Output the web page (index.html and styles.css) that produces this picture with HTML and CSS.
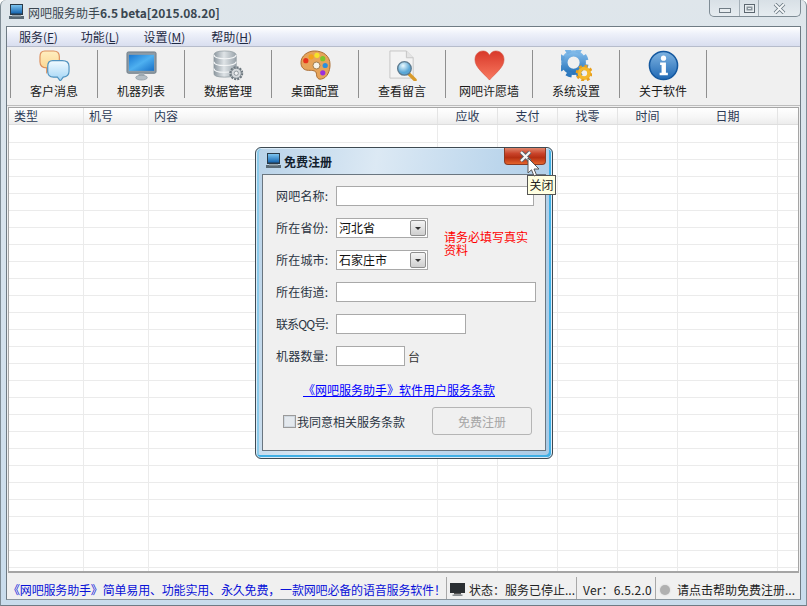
FILE: index.html
```html
<!DOCTYPE html>
<html lang="zh-CN">
<head>
<meta charset="utf-8">
<title>网吧服务助手</title>
<link rel="stylesheet" href="styles.css">
</head>
<body>
<div class="window">
  <header class="titlebar">
    <svg class="app-icon" viewBox="0 0 16 16"><defs><linearGradient id="scr" x1="0" y1="0" x2="0" y2="1"><stop offset="0" stop-color="#7cc4f0"/><stop offset="1" stop-color="#1565b0"/></linearGradient></defs><rect x="1" y="0" width="13" height="11" fill="#2a3a48"/><rect x="2" y="1" width="11" height="8.5" fill="url(#scr)"/><rect x="0" y="12" width="15" height="3" fill="#5a6a75"/><rect x="3" y="11" width="9" height="1.5" fill="#9aa8b0"/></svg>
    <span class="title-text">网吧服务助手<b>6.5 beta[2015.08.20]</b></span>
    <div class="win-controls">
      <span class="wc wc-min"><i class="glyph-min"></i></span>
      <span class="wc wc-max"><i class="glyph-max"></i></span>
      <span class="wc wc-close"><svg width="13" height="11" viewBox="0 0 13 11"><path d="M2 1 L11 10 M11 1 L2 10" stroke="#6d7b85" stroke-width="3.600" fill="none"/><path d="M2 1 L11 10 M11 1 L2 10" stroke="#f4f7f9" stroke-width="1.800" fill="none"/></svg></span>
    </div>
  </header>

  <div class="frame">
    <nav class="menubar">
      <span class="menu m1">服务(<u>F</u>)</span>
      <span class="menu m2">功能(<u>L</u>)</span>
      <span class="menu m3">设置(<u>M</u>)</span>
      <span class="menu m4">帮助(<u>H</u>)</span>
    </nav>

    <div class="toolbar">
      <div class="tool">
        <svg class="ticon" viewBox="0 0 32 32"><defs><linearGradient id="b1" x1="0" y1="0" x2="0" y2="1"><stop offset="0" stop-color="#ffeec0"/><stop offset="1" stop-color="#fbd28a"/></linearGradient><linearGradient id="b2" x1="0" y1="0" x2="0" y2="1"><stop offset="0" stop-color="#f2fbff"/><stop offset="1" stop-color="#9fd3f5"/></linearGradient></defs><path d="M6 1 H15 Q21 1 21 7 V13 Q21 19 15 19 H11 L8 23 V18.500 Q1 18 1 12 V7 Q1 1 6 1Z" fill="url(#b1)" stroke="#dd8f5c" stroke-width="1.200"/><path d="M14 11 H24 Q31 11 31 17 V22 Q31 27.500 25 28 L22 32 L19 28 H15 Q9 28 9 22 V17 Q9 11 14 11Z" fill="url(#b2)" stroke="#4f92bf" stroke-width="1.200"/></svg>
        <span class="tlabel">客户消息</span>
      </div>
      <div class="tool">
        <svg class="ticon" viewBox="0 0 32 32"><defs><linearGradient id="m1" x1="0" y1="0" x2="1" y2="1"><stop offset="0" stop-color="#1a78d2"/><stop offset=".5" stop-color="#4eb0f0"/><stop offset="1" stop-color="#1770c8"/></linearGradient></defs><rect x="1" y="2" width="30" height="22" rx="1.500" fill="#8e9ba5" stroke="#6e7c86"/><rect x="3" y="5" width="26" height="16.500" fill="url(#m1)"/><rect x="13" y="24" width="6" height="3" fill="#a5b0b8"/><ellipse cx="16" cy="28.500" rx="6" ry="2.500" fill="#b4bec5" stroke="#7d8a93" stroke-width=".6"/></svg>
        <span class="tlabel">机器列表</span>
      </div>
      <div class="tool">
        <svg class="ticon" viewBox="0 0 32 32"><defs><linearGradient id="d1" x1="0" y1="0" x2="1" y2="0"><stop offset="0" stop-color="#8c979f"/><stop offset=".45" stop-color="#dfe4e7"/><stop offset="1" stop-color="#99a3aa"/></linearGradient></defs><path d="M1 5 Q1 1 12 1 T24 5 V24 Q24 28 12 28 T1 24Z" fill="url(#d1)" stroke="#8a959c" stroke-width=".7"/><path d="M1 12 Q1 16 12 16 T24 12 M1 19 Q1 23 12 23 T24 19 M1 5 Q1 9 12 9 T24 5" fill="none" stroke="#f4f6f7" stroke-width="1.200"/><circle cx="24" cy="24" r="6" fill="#cfd4d7" stroke="#6d777e" stroke-width="2.400" stroke-dasharray="2 1.100"/><circle cx="24" cy="24" r="5.200" fill="#d5d9dc" stroke="#7c868d"/><circle cx="24" cy="24" r="2.200" fill="#f2f3f4" stroke="#7c868d" stroke-width=".8"/></svg>
        <span class="tlabel">数据管理</span>
      </div>
      <div class="tool">
        <svg class="ticon" viewBox="0 0 32 32"><path d="M15 1 C24 1 31 6 31 15 C31 22 28 29 22 30 C18 31 17 27 17 25 C17 21 13 21 9 21 C4 21 1 18 1 13 C1 6 8 1 15 1Z" fill="#e6a45a" stroke="#a9692d"/><circle cx="17" cy="16" r="3.600" fill="#f7f3ea" stroke="#9d7a4b"/><circle cx="6" cy="11" r="2.700" fill="#e8341c"/><circle cx="11.500" cy="7" r="2.700" fill="#f5a21a"/><circle cx="17.500" cy="5.500" r="2.700" fill="#f6e32a"/><circle cx="23.500" cy="9" r="2.700" fill="#7cc62e"/><circle cx="26" cy="16" r="2.700" fill="#2b8fdc"/><circle cx="23.500" cy="23.500" r="2.700" fill="#9a2fe0"/></svg>
        <span class="tlabel">桌面配置</span>
      </div>
      <div class="tool">
        <svg class="ticon" viewBox="0 0 32 32"><defs><radialGradient id="g1" cx=".4" cy=".3"><stop offset="0" stop-color="#eafaff"/><stop offset="1" stop-color="#5aa7d6"/></radialGradient></defs><path d="M3 1 H20 L27 8 V29 H3Z" fill="#f3f3f3" stroke="#c5c5c5"/><path d="M20 1 V8 H27" fill="#e4e4e4" stroke="#c5c5c5"/><line x1="23" y1="25" x2="29" y2="31" stroke="#d89a2a" stroke-width="3.400" stroke-linecap="round"/><circle cx="18" cy="19" r="7" fill="url(#g1)" stroke="#5e7b8f" stroke-width="1.400"/></svg>
        <span class="tlabel">查看留言</span>
      </div>
      <div class="tool">
        <svg class="ticon" viewBox="0 0 32 32"><defs><linearGradient id="h1" x1="0" y1="0" x2="0" y2="1"><stop offset="0" stop-color="#d8382a"/><stop offset="1" stop-color="#f97a60"/></linearGradient></defs><path d="M16 31 C10 24 1 18 1 10 C1 4 5 1 9.500 1 C12.500 1 15 3 16 5.500 C17 3 19.500 1 22.500 1 C27 1 31 4 31 10 C31 18 22 24 16 31Z" fill="url(#h1)" stroke="#d44f3e" stroke-width=".6"/></svg>
        <span class="tlabel">网吧许愿墙</span>
      </div>
      <div class="tool">
        <svg class="ticon" viewBox="0 0 32 32"><defs><linearGradient id="c1" x1="0" y1="0" x2="0" y2="1"><stop offset="0" stop-color="#7eb8e8"/><stop offset="1" stop-color="#2c78be"/></linearGradient></defs><circle cx="13" cy="13" r="9.500" fill="none" stroke="url(#c1)" stroke-width="6.500"/><circle cx="13" cy="13" r="13" fill="none" stroke="url(#c1)" stroke-width="5" stroke-dasharray="5.500 4.700" transform="rotate(8 13 13)"/><circle cx="24" cy="24" r="5" fill="none" stroke="#f4b82c" stroke-width="4"/><circle cx="24" cy="24" r="7.500" fill="none" stroke="#e99f1c" stroke-width="2.600" stroke-dasharray="3 2.900"/></svg>
        <span class="tlabel">系统设置</span>
      </div>
      <div class="tool">
        <svg class="ticon" viewBox="0 0 32 32"><defs><linearGradient id="i1" x1="0" y1="0" x2="0" y2="1"><stop offset="0" stop-color="#7fb4e2"/><stop offset="1" stop-color="#1f68b4"/></linearGradient></defs><circle cx="16" cy="16" r="14.500" fill="url(#i1)" stroke="#14589f" stroke-width="1.600"/><circle cx="16" cy="8.500" r="2.700" fill="#fff"/><path d="M12.500 13 H18.500 V23.500 H20.500 V26 H12 V23.500 H14 V15.500 H12.500Z" fill="#fff"/></svg>
        <span class="tlabel">关于软件</span>
      </div>
    </div>

    <section class="grid">
      <div class="grid-head">
        <span class="col c-type">类型</span>
        <span class="col c-no">机号</span>
        <span class="col c-body">内容</span>
        <span class="col c-due">应收</span>
        <span class="col c-pay">支付</span>
        <span class="col c-chg">找零</span>
        <span class="col c-time">时间</span>
        <span class="col c-date">日期</span>
        <span class="col c-rest"></span>
      </div>
      <div class="grid-body">
        <span class="col c-type"></span>
        <span class="col c-no"></span>
        <span class="col c-body"></span>
        <span class="col c-due"></span>
        <span class="col c-pay"></span>
        <span class="col c-chg"></span>
        <span class="col c-time"></span>
        <span class="col c-date"></span>
        <span class="col c-rest"></span>
      </div>
    </section>

    <footer class="statusbar">
      <span class="st st-news">《网吧服务助手》简单易用、功能实用、永久免费，一款网吧必备的语音服务软件！</span>
      <span class="st st-state"><svg width="15" height="13" viewBox="0 0 15 13"><rect x="0" y="0" width="15" height="10" fill="#2b2f33"/><rect x="4" y="10" width="7" height="1.500" fill="#555"/><rect x="2.500" y="11.500" width="10" height="1.500" fill="#8a8f93"/></svg>状态：服务已停止...</span>
      <span class="st st-ver">Ver：6.5.2.0</span>
      <span class="st st-help"><i class="dot"></i>请点击帮助免费注册...</span>
    </footer>
  </div>

  <div class="dialog">
    <div class="dlg-title">
      <svg class="dlg-icon" viewBox="0 0 16 16"><rect x="1" y="0" width="13" height="11" fill="#2a3a48"/><rect x="2" y="1" width="11" height="8.500" fill="url(#scr)"/><rect x="0" y="12" width="15" height="3" fill="#5a6a75"/><rect x="3" y="11" width="9" height="1.500" fill="#9aa8b0"/></svg>
      <span class="dlg-text">免费注册</span>
      <span class="dlg-close"><svg width="13" height="11" viewBox="0 0 13 11"><path d="M2 1 L11 10 M11 1 L2 10" stroke="#59636b" stroke-width="4" fill="none"/><path d="M2 1 L11 10 M11 1 L2 10" stroke="#f7f7f7" stroke-width="2.200" fill="none"/></svg></span>
    </div>
    <form class="dlg-panel">
      <div class="row"><label class="lbl">网吧名称:</label><input class="field w198" type="text"></div>
      <div class="pair">
        <div class="pair-rows">
          <div class="row"><label class="lbl">所在省份:</label><div class="combo"><span>河北省</span><b class="arrow"></b></div></div>
          <div class="row"><label class="lbl">所在城市:</label><div class="combo"><span>石家庄市</span><b class="arrow"></b></div></div>
        </div>
        <div class="note">请务必填写真实资料</div>
      </div>
      <div class="row"><label class="lbl">所在街道:</label><input class="field w200" type="text"></div>
      <div class="row"><label class="lbl lbl-tight">联系QQ号:</label><input class="field w130" type="text"></div>
      <div class="row"><label class="lbl">机器数量:</label><input class="field w69" type="text"><span class="unit">台</span></div>
      <a class="terms" href="#">《网吧服务助手》软件用户服务条款</a>
      <div class="agree">
        <span class="check"><i class="box"></i>我同意相关服务条款</span>
        <button class="submit" type="button" disabled>免费注册</button>
      </div>
    </form>
  </div>

  <div class="tooltip">关闭</div>
  <svg class="cursor" width="14" height="21" viewBox="0 0 14 21"><path d="M1 1 V16 L4.500 12.800 L7 19 L9.500 18 L7 12 H12Z" fill="#fff" stroke="#555" stroke-width="1"/></svg>
</div>
</body>
</html>
```

FILE: styles.css
```css
* { box-sizing: border-box; }
html, body { margin: 0; padding: 0; }
body {
  width: 807px;
  height: 606px;
  overflow: hidden;
  font-family: "Noto Sans CJK SC", "Liberation Sans", sans-serif;
  font-size: 12px;
  color: #222;
}
.window {
  position: relative;
  width: 807px;
  height: 606px;
  padding: 0 5px 5px;
  display: flex;
  flex-direction: column;
  background: linear-gradient(180deg, #dfe6eb 0, #d9e4ed 30%, #c9dcec 100%);
  border-left: 1px solid #7f8c95;
  border-right: 1px solid #7f8c95;
  border-bottom: 1px solid #6f7b84;
  border-radius: 6px 6px 0 0;
}
.titlebar {
  height: 26px;
  flex: none;
  display: flex;
  align-items: center;
  padding: 0 0 2px 3px;
  position: relative;
}
.app-icon { width: 16px; height: 16px; margin-right: 3px; flex: none; }
.title-text { font-size: 12px; color: #3a4650; line-height: 16px; margin-top: 2px; }
.title-text b { font-weight: 700; letter-spacing: -.05px; }
.win-controls {
  position: absolute;
  right: 0;
  top: 0;
  height: 17px;
  display: flex;
  border: 1px solid #7f8c95;
  border-top: 0;
  border-radius: 0 0 5px 5px;
  background: linear-gradient(180deg, #d8e0e6, #e6ecf0);
}
.wc { display: flex; align-items: center; justify-content: center; height: 100%; }
.wc-min { width: 30px; border-right: 1px solid #a5b0b8; }
.wc-max { width: 19px; border-right: 1px solid #a5b0b8; }
.wc-close { width: 41px; }
.glyph-min { display: block; width: 12px; height: 5px; margin-top: 5px; background: #e8edf0; border: 1px solid #707c85; }
.glyph-max { display: block; width: 11px; height: 9px; background: #e8edf0; border: 1px solid #5c6770; box-shadow: inset 0 0 0 1.500px #e8edf0, inset 0 0 0 3px #8a959d; }

.frame {
  flex: 1;
  min-height: 0;
  display: flex;
  flex-direction: column;
  border: 1px solid #6f7b84;
  border-bottom: 1px solid #8a959d;
  background: #f0f0f0;
}
.menubar {
  height: 20px;
  display: flex;
  align-items: center;
  background: linear-gradient(180deg, #ffffff 0, #eef1fa 35%, #d9deef 100%);
  border-bottom: 1px solid #b6bccb;
  color: #1f2a44;
  flex: none;
}
.menu { line-height: 16px; }
.m1 { margin-left: 12px; }
.m2 { margin-left: 23px; }
.m3 { margin-left: 24px; }
.m4 { margin-left: 26px; }

.toolbar {
  height: 59px;
  flex: none;
  display: flex;
  padding: 3px 0 0 3px;
  background: #f0f0f0;
  border-bottom: 1px solid #bdbdbd;
}
.tool {
  width: 87px;
  height: 48px;
  display: flex;
  flex-direction: column;
  align-items: center;
  border-left: 1px solid #8f8f8f;
  color: #1a1a1a;
}
.tool:last-child { width: 88px; border-right: 1px solid #8f8f8f; }
.ticon { width: 31px; height: 31px; display: block; flex: none; }
.tlabel { line-height: 16px; margin-top: 2px; white-space: nowrap; }

.grid {
  flex: 1;
  min-height: 0;
  margin: 1px 1px 0 1px;
  display: flex;
  flex-direction: column;
  background: #fff;
  border: 1px solid #a5a5a5;
  border-bottom: 2px solid #a5a5a5;
}
.grid-head, .grid-body { display: flex; }
.grid-head {
  height: 17px;
  flex: none;
  background: linear-gradient(180deg, #fff 0, #f6f6f6 60%, #ececec 100%);
  border-bottom: 1px solid #dedede;
  color: #2c3a55;
  line-height: 16px;
}
.grid-body {
  flex: 1;
  min-height: 0;
  background: repeating-linear-gradient(180deg, #fff 0, #fff 16px, #ebebeb 16px, #ebebeb 17px) 0 1px;
}
.col { display: block; flex: none; border-right: 1px solid #ebebeb; }
.grid-head .col { text-align: center; border-right-color: #e4e4e4; }
.grid-head .c-type, .grid-head .c-no, .grid-head .c-body { text-align: left; padding-left: 5px; }
.c-type { width: 75px; }
.c-no { width: 65px; }
.c-body { width: 289px; }
.c-due { width: 60px; }
.c-pay { width: 60px; }
.c-chg { width: 60px; }
.c-time { width: 60px; }
.c-date { width: 100px; }
.c-rest { flex: 1; border-right: 0; }

.statusbar {
  height: 26px;
  flex: none;
  display: flex;
  align-items: flex-end;
  background: #f0f0f0;
  font-size: 12px;
  padding: 0 0 0 1px;
}
.st {
  height: 22px;
  padding-top: 3px;
  line-height: 18px;
  white-space: nowrap;
  overflow: hidden;
  border-right: 1px solid #a8a8a8;
  display: flex;
  align-items: center;
}
.st-news { width: 439px; color: #0a12d8; letter-spacing: -.17px; }
.st-state { width: 130px; padding-left: 3px; gap: 4px; color: #222; }
.st-ver { width: 79px; padding-left: 6px; letter-spacing: .2px; }
.st-help { flex: 1; border-right: 0; padding-left: 4px; gap: 7px; }
.dot { width: 10px; height: 10px; border-radius: 50%; background: #b0b0b0; box-shadow: 0 0 2px #ccc; flex: none; }

.dialog {
  position: absolute;
  left: 254px;
  top: 147px;
  width: 298px;
  height: 312px;
  display: flex;
  flex-direction: column;
  padding: 0 6px 7px;
  border: 1px solid #3e4a52;
  border-radius: 6px;
  background: linear-gradient(100deg, #b8d2e8 0, #dce9f4 35%, #bcd6ec 70%, #a9cbe6 100%);
  box-shadow: inset 0 0 0 1px #dcecf8, inset -2px -2px 0 1px #3fb0e6, inset 2px 0 0 1px #8ccbea;
}
.dlg-title { height: 26px; flex: none; display: flex; align-items: center; position: relative; padding-left: 4px; }
.dlg-icon { width: 16px; height: 16px; margin-right: 2px; flex: none; }
.dlg-text { font-weight: 700; font-size: 12px; color: #12202c; }
.dlg-close {
  position: absolute;
  right: 0;
  top: 0;
  width: 42px;
  height: 17px;
  display: flex;
  align-items: center;
  justify-content: center;
  border: 1px solid #8c3a22;
  border-top: 0;
  border-radius: 0 0 4px 4px;
  background: linear-gradient(180deg, #e0866c 0, #c9432a 35%, #b52f12 60%, #e4642c 100%);
}
.dlg-panel {
  flex: 1;
  background: #f0f0f0;
  border: 1px solid #6a7680;
  padding: 11px 0 0 13px;
  position: relative;
}
.row { height: 20px; display: flex; align-items: center; margin-bottom: 12px; }
.lbl { width: 60px; flex: none; color: #2a3442; white-space: nowrap; letter-spacing: .2px; padding-bottom: 2px; }
.lbl-tight { letter-spacing: -.9px; }
.field { height: 20px; padding: 0; background: #fff; border: 1px solid #a9a9a9; outline: 0; display: block; }
.w198 { width: 198px; }
.w200 { width: 200px; }
.w130 { width: 130px; }
.w69 { width: 69px; }
.unit { margin-left: 3px; color: #333; }
.pair { display: flex; }
.combo {
  width: 92px;
  height: 20px;
  background: #fff;
  border: 1px solid #a9a9a9;
  display: flex;
  align-items: center;
  justify-content: space-between;
  padding: 0 1px 2px 2px;
  color: #111;
}
.arrow {
  width: 16px;
  height: 16px;
  margin-top: 2px;
  border: 1px solid #8e8e8e;
  border-radius: 2px;
  background: linear-gradient(180deg, #f4f4f4, #cfcfcf);
  position: relative;
  display: block;
}
.arrow::after {
  content: "";
  position: absolute;
  left: 4px;
  top: 6px;
  border: 3px solid transparent;
  border-top: 3px solid #333;
}
.note { width: 90px; margin: 12px 0 0 16px; color: #f00; line-height: 13px; word-break: break-all; }
.terms { display: block; margin: 16px 0 0 27px; color: #00f; line-height: 16px; text-decoration: underline; white-space: nowrap; }
.agree { display: flex; align-items: center; margin: 9px 0 0 7px; }
.check { display: flex; align-items: center; width: 149px; color: #2a3442; white-space: nowrap; }
.box { width: 13px; height: 13px; margin-right: 1px; background: #e4e9ee; border: 1px solid #9a9a9a; box-shadow: inset 0 0 0 1px #d0d8e0; }
.submit {
  width: 100px;
  height: 28px;
  border: 1px solid #b5b5b5;
  border-radius: 3px;
  background: #f0f0f0;
  color: #a5a5a5;
  font: inherit;
  padding: 0;
}
.tooltip {
  position: absolute;
  left: 526px;
  top: 175px;
  width: 29px;
  height: 20px;
  background: #ffffe1;
  border: 1px solid #555;
  line-height: 18px;
  text-align: center;
  color: #222;
  font-size: 12px;
}
.cursor { position: absolute; left: 526px; top: 157px; }
```
